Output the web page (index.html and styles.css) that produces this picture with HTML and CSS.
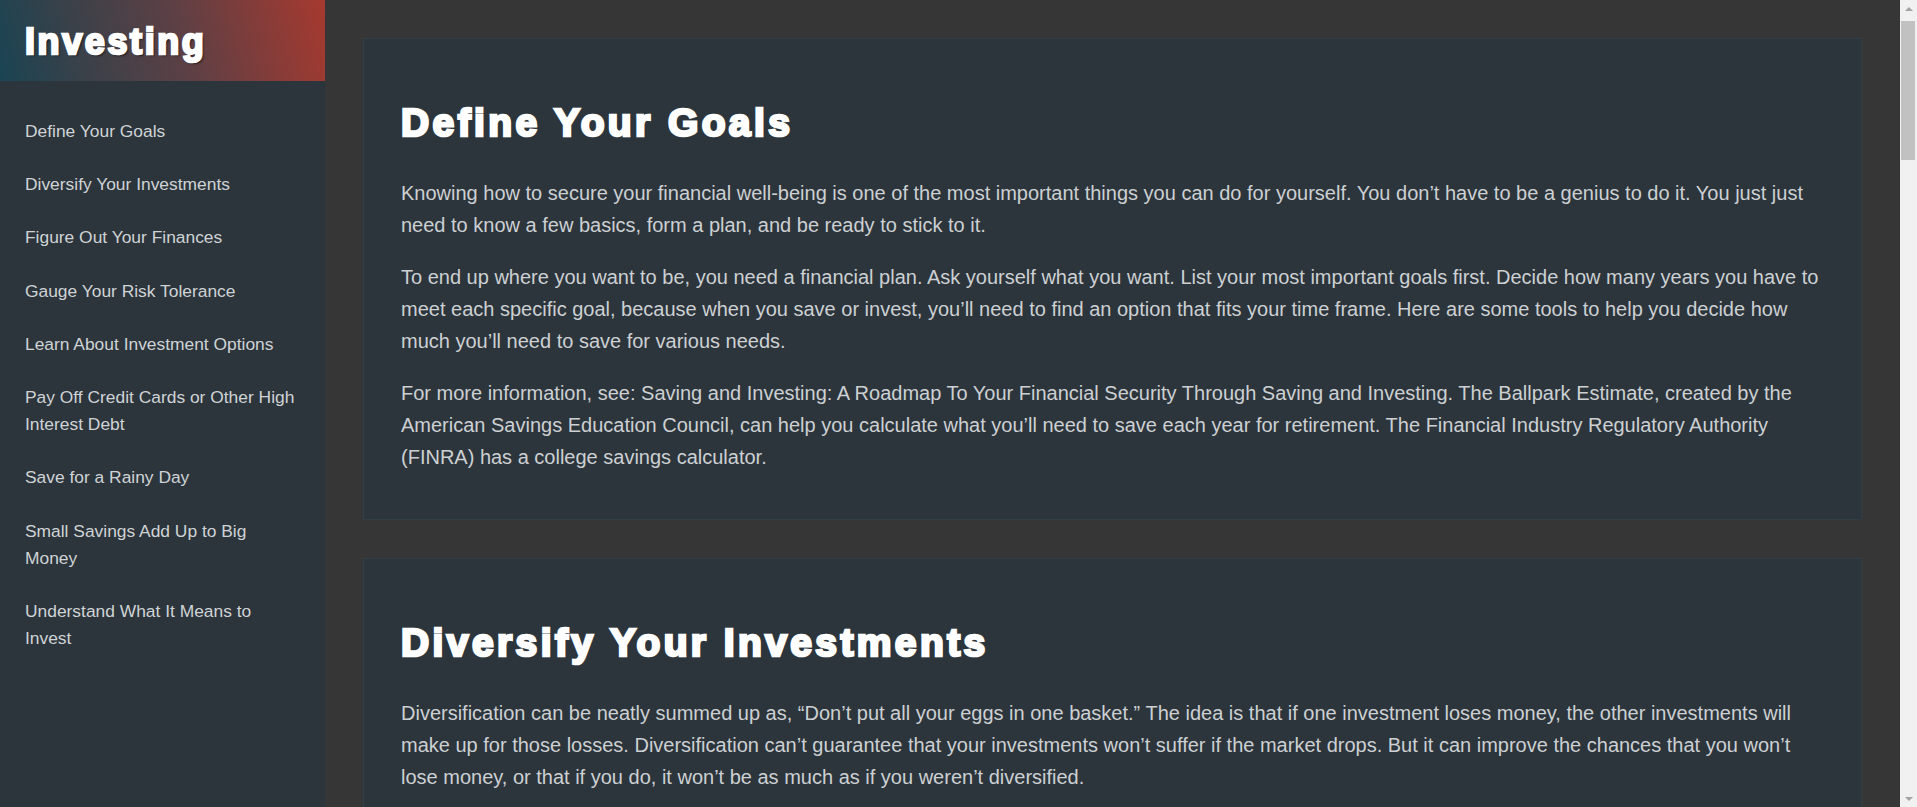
FILE: index.html
```html
<!DOCTYPE html>
<html lang="en">
<head>
<meta charset="utf-8">
<title>Investing</title>
<link rel="stylesheet" href="styles.css">
</head>
<body>
<nav class="sidebar" id="navbar">
  <header class="brand"><span class="brand-title">Investing</span></header>
  <ul class="nav-list">
    <li><a class="nav-link" href="#Define_Your_Goals">Define Your Goals</a></li>
    <li><a class="nav-link" href="#Diversify_Your_Investments">Diversify Your Investments</a></li>
    <li><a class="nav-link" href="#Figure_Out_Your_Finances">Figure Out Your Finances</a></li>
    <li><a class="nav-link" href="#Gauge_Your_Risk_Tolerance">Gauge Your Risk Tolerance</a></li>
    <li><a class="nav-link" href="#Learn_About_Investment_Options">Learn About Investment Options</a></li>
    <li><a class="nav-link" href="#Pay_Off_Credit_Cards">Pay Off Credit Cards or Other High Interest Debt</a></li>
    <li><a class="nav-link" href="#Save_for_a_Rainy_Day">Save for a Rainy Day</a></li>
    <li><a class="nav-link" href="#Small_Savings">Small Savings Add Up to Big Money</a></li>
    <li><a class="nav-link" href="#Understand_What_It_Means">Understand What It Means to Invest</a></li>
  </ul>
</nav>

<main class="content" id="main-doc">
  <section class="card" id="Define_Your_Goals">
    <h2 class="card-title">Define Your Goals</h2>
    <p>Knowing how to secure your financial well-being is one of the most important things you can do for yourself. You don’t have to be a genius to do it. You just just need to know a few basics, form a plan, and be ready to stick to it.</p>
    <p>To end up where you want to be, you need a financial plan. Ask yourself what you want. List your most important goals first. Decide how many years you have to meet each specific goal, because when you save or invest, you’ll need to find an option that fits your time frame. Here are some tools to help you decide how much you’ll need to save for various needs.</p>
    <p>For more information, see: Saving and Investing: A Roadmap To Your Financial Security Through Saving and Investing. The Ballpark Estimate, created by the American Savings Education Council, can help you calculate what you’ll need to save each year for retirement. The Financial Industry Regulatory Authority (FINRA) has a college savings calculator.</p>
  </section>

  <section class="card" id="Diversify_Your_Investments">
    <h2 class="card-title">Diversify Your Investments</h2>
    <p>Diversification can be neatly summed up as, “Don’t put all your eggs in one basket.” The idea is that if one investment loses money, the other investments will make up for those losses. Diversification can’t guarantee that your investments won’t suffer if the market drops. But it can improve the chances that you won’t lose money, or that if you do, it won’t be as much as if you weren’t diversified.</p>
    <p>One way to diversify is to spread your money among different asset categories, such as stocks, bonds, and cash. Another is to spread your money within each category, holding shares of many different companies in many different industries rather than only a few.</p>
    <p>Mutual funds and exchange-traded funds can make diversification easier, since a single fund may hold hundreds of different securities. Be sure to review your mix from time to time to make sure it still matches your goals.</p>
  </section>

  <section class="card" id="Figure_Out_Your_Finances">
    <h2 class="card-title">Figure Out Your Finances</h2>
    <p>Take an honest look at your entire financial situation. You can’t reach your goals unless you know where you are today. Make a list of what you own and what you owe, and figure out your net worth. Then look at how much money comes in each month and how much goes out.</p>
    <p>Keep track of your spending for a month or two. You may be surprised at how the little things add up. Once you know where your money goes, you can decide where to cut back and how much you can set aside each month for saving and investing. Use a budget worksheet, an online tool, or a simple notebook, whatever helps you stick with it.</p>
    <p>Remember that your finances will change over time. Review your plan at least once a year, or whenever something big happens in your life, such as a new job, a marriage, the birth of a child, or a move to a new home.</p>
  </section>

  <section class="card" id="Gauge_Your_Risk_Tolerance">
    <h2 class="card-title">Gauge Your Risk Tolerance</h2>
    <p>All investments involve some degree of risk. If you intend to purchase securities, such as stocks, bonds, or mutual funds, it’s important that you understand before you invest that you could lose some or all of your money. Unlike deposits at banks and credit unions, the money you invest in securities typically is not federally insured.</p>
    <p>The reward for taking on risk is the potential for a greater investment return. If you have a financial goal with a long time horizon, you are likely to make more money by carefully investing in asset categories with greater risk, like stocks or bonds, rather than restricting your investments to assets with less risk, like cash equivalents.</p>
    <p>On the other hand, investing solely in cash investments may be appropriate for short-term financial goals.</p>
  </section>

  <section class="card" id="Learn_About_Investment_Options">
    <h2 class="card-title">Learn About Investment Options</h2>
    <p>Before you make any investment, understand what you are buying. Stocks represent a share of ownership in a company, bonds are loans you make to a company or government, and mutual funds pool money from many investors to buy a mix of securities. Each option has its own costs, risks, and potential rewards.</p>
    <p>Ask questions and read the prospectus or offering documents carefully. Find out how the investment makes money, what fees you will pay, how easily you can sell it, and who is selling it to you. Never invest in something you don’t understand, and be wary of anyone who promises high returns with little or no risk.</p>
    <p>Check the background of investment professionals before you hand over your money. Free tools can tell you whether a broker or adviser is registered and whether they have a history of complaints.</p>
  </section>

  <section class="card" id="Pay_Off_Credit_Cards">
    <h2 class="card-title">Pay Off Credit Cards or Other High Interest Debt</h2>
    <p>There is no investment strategy anywhere that pays off as well as, or with less risk than, merely paying off all high interest debt you may have. If you owe money on high interest credit cards, the wisest thing you can do under any market conditions is to pay off the balance in full as quickly as possible.</p>
    <p>For example, if you owe $1,000 on a credit card with an 18 percent interest rate and pay only the minimum payment each month, it will take you more than 12 years to pay off the debt, and you will end up paying far more than the original amount you borrowed.</p>
    <p>Once your high interest debt is gone, you can put the money you were spending on payments toward your savings and investments instead.</p>
  </section>

  <section class="card" id="Save_for_a_Rainy_Day">
    <h2 class="card-title">Save for a Rainy Day</h2>
    <p>Most smart investors put enough money in a savings product to cover an emergency, like sudden unemployment. Some make sure they have up to six months of their income in savings so that they know it will absolutely be there for them when they need it.</p>
    <p>Keep your emergency fund in a place where you can reach it quickly and where its value won’t swing up and down, such as a savings account or a money market account. The goal of this money is safety and easy access, not high returns.</p>
    <p>If you have to use your emergency fund, make rebuilding it a top priority so that you are ready for the next surprise.</p>
  </section>

  <section class="card" id="Small_Savings">
    <h2 class="card-title">Small Savings Add Up to Big Money</h2>
    <p>How does a small amount of money grow into a larger amount? Let’s say you buy a cup of coffee every weekday. If you saved that money instead and put it in an account that earns interest, over the years the savings could grow into thousands of dollars thanks to the power of compounding.</p>
    <p>Compounding means that the interest you earn also earns interest. The earlier you start, the more time your money has to grow. Even small, regular contributions to a retirement plan or savings account can make a big difference over the long run.</p>
    <p>Consider setting up automatic transfers from your paycheck or checking account so that saving happens without you having to think about it.</p>
  </section>

  <section class="card" id="Understand_What_It_Means">
    <h2 class="card-title">Understand What It Means to Invest</h2>
    <p>When you save money, you put it in a safe place, like a bank account, where you can get to it easily. When you invest, you buy assets such as stocks, bonds, mutual funds, or real estate with the hope that they will grow in value over time or produce income.</p>
    <p>Investing carries more risk than saving, but it also offers the chance of earning more. The key is to match your investments to your goals, your time frame, and how much risk you are comfortable taking. Start with a plan, stay diversified, and keep your costs low.</p>
  </section>
</main>

<div class="scrollbar" aria-hidden="true">
  <div class="scroll-btn scroll-up"><span class="arrow-up"></span></div>
  <div class="scroll-track"><div class="scroll-thumb"></div></div>
  <div class="scroll-btn scroll-down"><span class="arrow-down"></span></div>
</div>
</body>
</html>
```

FILE: styles.css
```css
html, body {
  margin: 0;
  padding: 0;
}

body {
  background: #363636;
  font-family: "Liberation Sans", Arial, sans-serif;
  color: #ccd0d3;
}

.sidebar {
  position: fixed;
  top: 0;
  left: 0;
  bottom: 0;
  width: 325px;
  background: #2c353b;
  overflow: hidden;
}

.brand {
  height: 81px;
  box-sizing: border-box;
  padding: 2px 25px 0 25px;
  display: flex;
  align-items: center;
  background: linear-gradient(75deg, #1a4453 0%, #3a4149 25%, #5c4045 55%, #a6392f 100%);
}

.brand-title {
  font-size: 36px;
  font-weight: bold;
  color: #ffffff;
  letter-spacing: 2.6px;
  -webkit-text-stroke: 2.4px #ffffff;
  text-shadow: 2px 2px 2px rgba(0, 0, 0, 0.55);
}

.nav-list {
  list-style: none;
  margin: 0;
  padding: 24px 0 0 0;
}

.nav-link {
  display: block;
  padding: 13px 26px 13px 25px;
  font-size: 17.4px;
  line-height: 27.2px;
  color: #cfd3d6;
  text-decoration: none;
}

.content {
  margin-left: 325px;
  margin-right: 17px;
  padding: 38px;
  display: flex;
  flex-direction: column;
  gap: 38px;
}

.card {
  background: #2c353b;
  border: 1px solid #303f47;
  padding: 37px 37px 46px;
}

.card-title {
  margin: 24px 0 31px;
  font-size: 39px;
  line-height: 46px;
  font-weight: bold;
  color: #ffffff;
  letter-spacing: 3.4px;
  -webkit-text-stroke: 2.6px #ffffff;
}

.card p {
  margin: 0 0 20px;
  font-size: 20px;
  line-height: 32px;
}

.card p:last-child {
  margin-bottom: 0;
}

/* classic browser scrollbar, drawn over the right edge */
.scrollbar {
  position: fixed;
  top: 0;
  right: 0;
  bottom: 0;
  width: 17px;
  background: #f1f1f1;
  display: flex;
  flex-direction: column;
}

.scroll-btn {
  height: 17px;
  flex: none;
  display: flex;
  align-items: center;
  justify-content: center;
}

.arrow-up {
  width: 0;
  height: 0;
  border-left: 4px solid transparent;
  border-right: 4px solid transparent;
  border-bottom: 4px solid #a3a3a3;
}

.arrow-down {
  width: 0;
  height: 0;
  border-left: 4px solid transparent;
  border-right: 4px solid transparent;
  border-top: 4px solid #a3a3a3;
}

.scroll-track {
  flex: 1;
  padding: 4px 2px 0 1px;
}

.scroll-thumb {
  height: 139px;
  background: #c1c1c1;
}
```
